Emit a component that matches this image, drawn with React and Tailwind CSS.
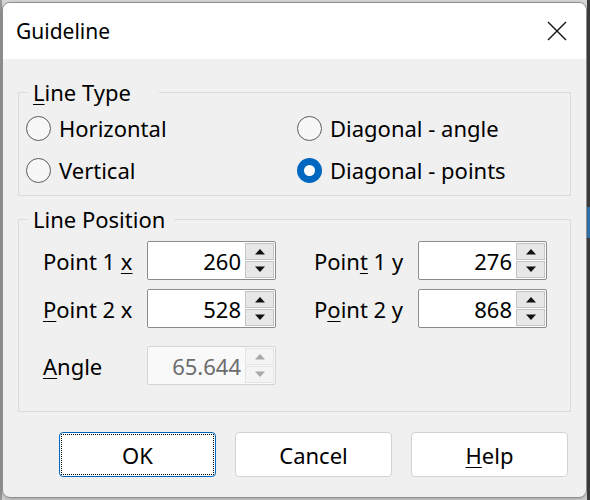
import React from "react";

const font = { fontFamily: '"Noto Sans", "Open Sans", sans-serif' };

const Radio = ({ checked, label }) => (
  <div className="flex items-center h-[34px]">
    {checked ? (
      <span className="w-[25px] h-[25px] rounded-full bg-[#0067c0] flex items-center justify-center">
        <span className="w-[11px] h-[11px] rounded-full bg-white" />
      </span>
    ) : (
      <span className="w-[25px] h-[25px] rounded-full border-[1.5px] border-[#5c5c5c] bg-[#f7f7f7]" />
    )}
    <span className="ml-[8px] text-[22px] text-black leading-none">{label}</span>
  </div>
);

const Arrow = ({ up, disabled }) => (
  <svg width="12" height="7" viewBox="0 0 12 7">
    <path
      d={up ? "M1 6.5 L6 1 L11 6.5 Z" : "M1 0.5 L6 6 L11 0.5 Z"}
      fill={disabled ? "#a8a8a8" : "#111"}
    />
  </svg>
);

const Spin = ({ value, disabled }) => (
  <div
    className={`flex w-[129px] h-[39px] border ${
      disabled ? "border-[#d4d4d4] bg-[#f9f9f9]" : "border-[#8c8c8c] bg-white"
    } rounded-[2px]`}
  >
    <div
      className={`flex-1 flex items-center justify-end pr-[3px] text-[22px] leading-none ${
        disabled ? "text-[#6d6d6d]" : "text-black"
      }`}
    >
      {value}
    </div>
    <div className="w-[31px] flex flex-col p-[1px] gap-[1px]">
      <div
        className={`flex-1 flex items-center justify-center ${
          disabled ? "bg-[#f4f4f4] border border-[#e4e4e4]" : "bg-[#e7e7e7] border border-[#c4c4c4]"
        }`}
      >
        <Arrow up disabled={disabled} />
      </div>
      <div
        className={`flex-1 flex items-center justify-center ${
          disabled ? "bg-[#f4f4f4] border border-[#e4e4e4]" : "bg-[#e7e7e7] border border-[#c4c4c4]"
        }`}
      >
        <Arrow disabled={disabled} />
      </div>
    </div>
  </div>
);

const Field = ({ label, value, disabled }) => (
  <div className="flex items-center">
    <span className="text-[22px] leading-none text-black w-[104px]">{label}</span>
    <Spin value={value} disabled={disabled} />
  </div>
);

const u = (c) => <span className="underline underline-offset-[3px] decoration-[1px]">{c}</span>;

const Button = ({ children, focused }) => (
  <button
    className={`w-[157px] h-[45px] rounded-[4px] bg-white text-[22px] leading-none text-black flex items-center justify-center ${
      focused ? "border border-[#0067c0] p-[1px]" : "border border-[#d3d3d3]"
    }`}
  >
    {focused ? (
      <span className="w-full h-full border border-dotted border-black flex items-center justify-center">
        {children}
      </span>
    ) : (
      children
    )}
  </button>
);

export default function App() {
  return (
    <div className="w-[590px] h-[500px] bg-[#d9d9d9] flex overflow-hidden" style={font}>
      <div className="w-[2px] h-full bg-[#9a9a9a]" />
      <div className="mt-[2px] w-[585px] h-[496px] rounded-[8px] border border-[#8e8e8e] bg-[#f0f0f0] overflow-hidden flex flex-col shadow-[0_2px_6px_rgba(0,0,0,0.25)]">
        {/* title bar */}
        <div className="h-[56px] bg-white flex items-center justify-between pl-[13px] pr-[19px]">
          <span className="text-[21px] text-black leading-none">Guideline</span>
          <svg width="20" height="20" viewBox="0 0 20 20">
            <path d="M1 1 L19 19 M19 1 L1 19" stroke="#111" strokeWidth="1.4" />
          </svg>
        </div>

        <div className="px-[15px] pt-[22px]">
          {/* line type group */}
          <fieldset className="border border-[#dcdcdc] h-[115px]">
            <legend className="ml-[8px] pl-[6px] pr-[28px] text-[22px] leading-none text-black">
              {u("L")}ine Type
            </legend>
            <div className="grid grid-cols-[271px_1fr] gap-y-[8px] pl-[7px] pt-[8px]">
              <Radio label="Horizontal" />
              <Radio label="Diagonal - angle" />
              <Radio label="Vertical" />
              <Radio checked label="Diagonal - points" />
            </div>
          </fieldset>

          {/* line position group */}
          <fieldset className="mt-[12px] border border-[#dcdcdc] h-[204px]">
            <legend className="ml-[8px] pl-[6px] pr-[9px] text-[22px] leading-none text-black">
              Line Position
            </legend>
            <div className="flex flex-col gap-[9px] pl-[24px] pt-[11px]">
              <div className="flex">
                <Field label={<>Point 1 {u("x")}</>} value="260" />
                <div className="ml-[38px]">
                  <Field label={<>Poin{u("t")} 1 y</>} value="276" />
                </div>
              </div>
              <div className="flex">
                <Field label={<>{u("P")}oint 2 x</>} value="528" />
                <div className="ml-[38px]">
                  <Field label={<>P{u("o")}int 2 y</>} value="868" />
                </div>
              </div>
              <div className="mt-[9px]">
                <Field label={<>{u("A")}ngle</>} value="65.644" disabled />
              </div>
            </div>
          </fieldset>

          {/* buttons */}
          <div className="flex justify-end gap-[19px] mt-[20px] pr-[3px]">
            <Button focused>OK</Button>
            <Button>Cancel</Button>
            <Button>{u("H")}elp</Button>
          </div>
        </div>
      </div>
      <div className="flex-1 flex flex-col bg-[#3a3a3a]">
        <div className="h-[207px]" />
        <div className="h-[31px] bg-[#2f6ea5]" />
      </div>
    </div>
  );
}
